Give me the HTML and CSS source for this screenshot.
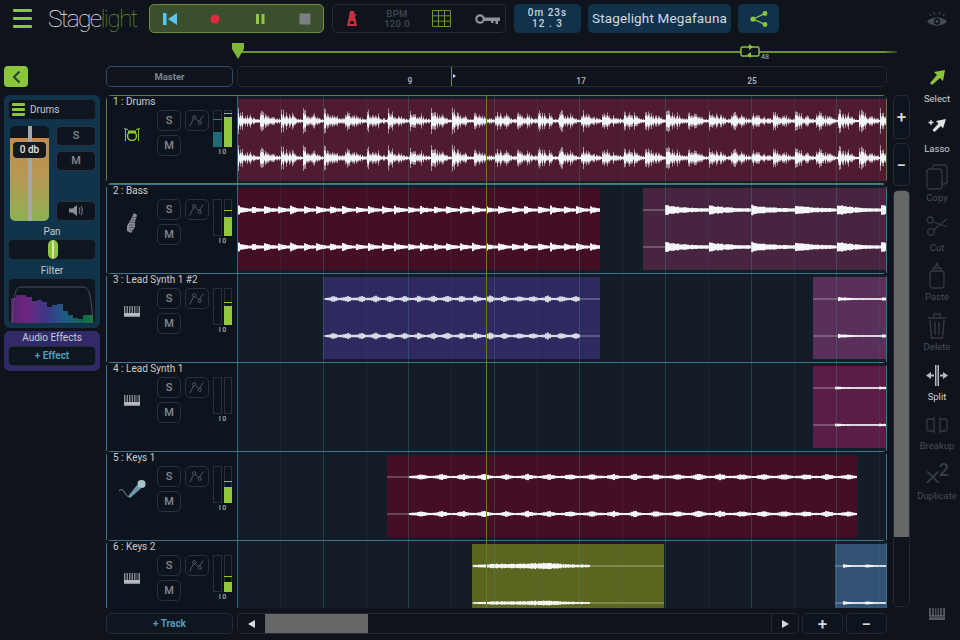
FILE: index.html
```html
<!DOCTYPE html>
<html lang="en">
<head>
<meta charset="utf-8">
<title>Stagelight</title>
<link rel="stylesheet" href="styles.css">
</head>
<body>
<svg class="defs" width="0" height="0" aria-hidden="true">
  <symbol id="i-auto" viewBox="0 0 24 21">
    <path d="M4 17 L9 7 L14 12 L19 5" fill="none" stroke="currentColor" stroke-width="1"/>
    <circle cx="9" cy="7" r="1.8" fill="#0e141d" stroke="currentColor"/>
    <circle cx="15" cy="13" r="1.8" fill="#0e141d" stroke="currentColor"/>
  </symbol>
  <symbol id="i-keys" viewBox="0 0 16 11">
    <path d="M0 0h16v11H0z" fill="#8d9399"/>
    <path d="M2 0v7M4.500 0v7M7 0v7M9.500 0v7M12 0v7M14 0v7" stroke="#0e141d" stroke-width="1.200"/>
    <path d="M0 8.500h16" stroke="#c4c8cc" stroke-width="2"/>
  </symbol>
</svg>
<div class="app">
  <header class="topbar">
    <div class="burger"><i></i><i></i><i></i></div>
    <div class="logo"><span class="logo-a">Stage</span><span class="logo-b">light</span></div>
    <div class="transport">
      <svg class="t-icon" viewBox="0 0 14 12"><rect width="3.500" height="12" fill="#5cc6ef"/><path d="M14 0v12L5 6z" fill="#5cc6ef"/></svg>
      <svg class="t-icon" viewBox="0 0 14 12"><circle cx="7" cy="6" r="4.500" fill="#de2a3f"/></svg>
      <svg class="t-icon" viewBox="0 0 14 12"><path d="M3 1h3v10H3zM8.500 1h3v10h-3z" fill="#93c83e"/></svg>
      <svg class="t-icon" viewBox="0 0 14 12"><rect x="1.500" y="0.500" width="11" height="11" fill="#7c7f84"/></svg>
    </div>
    <div class="tools-group">
      <svg class="metro" viewBox="0 0 10 16"><path d="M3 0h4l3 15H0z" fill="#c5303e"/><path d="M3.500 10h3l.6 3H2.900z" fill="#0e131c"/><path d="M5 9 9 3" stroke="#c5303e" stroke-width="1.300"/></svg>
      <div class="bpm"><span>BPM</span><span>120.0</span></div>
      <svg class="gridicon" viewBox="0 0 19 17"><path d="M.5.500h18v16H.5zM6.500.500v16M12.500.500v16M.5 5.800h18M.5 11.200h18" fill="none" stroke="#6d9430" stroke-width="1"/></svg>
      <svg class="key" viewBox="0 0 25 10"><circle cx="5" cy="5" r="3.700" fill="none" stroke="#8f9398" stroke-width="2.200"/><path d="M9 3.500h16V7h-2v3h-2.500V7h-2v2h-2.500V7H9z" fill="#8f9398"/></svg>
    </div>
    <div class="clock"><span>0m 23s</span><span>12 . 3</span></div>
    <div class="song">Stagelight Megafauna</div>
    <div class="share">
      <svg viewBox="0 0 18 16" width="18" height="16"><path d="M3 8 15 2.500M3 8l12 5.500" stroke="#8bc53a" stroke-width="1.300"/><circle cx="3" cy="8" r="2.600" fill="#8bc53a"/><circle cx="15" cy="2.500" r="2.400" fill="#8bc53a"/><circle cx="15" cy="13.500" r="2.400" fill="#8bc53a"/></svg>
    </div>
    <svg class="eye" viewBox="0 0 20 16"><path d="M0 10.500C4 5 16 5 20 10.500 16 16 4 16 0 10.500z" fill="#474d55"/><circle cx="10" cy="10.500" r="3.200" fill="#0e131c"/><circle cx="10" cy="10.500" r="1.500" fill="#474d55"/><path d="M4 5 2.500 2.500M7.500 3.800 7 1M12.500 3.800 13 1M16 5l1.500-2.500" stroke="#474d55"/></svg>
  </header>

  <div class="timeline">
    <div class="loopline">
      <svg class="loop-start" viewBox="0 0 12 16"><path d="M0 0h12v6l-6 10L0 6z" fill="#7fb636"/></svg>
      <svg class="loop-end" viewBox="0 0 20 14"><rect x="1" y="3" width="18" height="9" rx="1.500" fill="#0e131c" stroke="#8bc53a" stroke-width="1.400"/><path d="M9 0v6l4-3zM11 8v6l-4-3z" fill="#8bc53a"/></svg>
      <span class="loop-num">48</span>
    </div>
  </div>

  <div class="workspace">
    <aside class="leftcol">
      <div class="backbtn"><svg viewBox="0 0 9 14" width="9" height="14"><path d="M7.500 1.500 2 7l5.500 5.500" fill="none" stroke="#23412c" stroke-width="2"/></svg></div>
      <div class="inspector">
        <div class="insp-title">
          <div class="burger small"><i></i><i></i><i></i></div>
          <span>Drums</span>
        </div>
        <div class="insp-row">
          <div class="fader">
            <div class="fader-top"></div>
            <div class="fader-fill"></div>
            <div class="fader-bar"></div>
            <div class="fader-label">0 db</div>
          </div>
          <div class="insp-btns">
            <div class="btn">S</div>
            <div class="btn">M</div>
            <div class="btn push-down"><svg viewBox="0 0 14 11" width="14" height="11"><path d="M0 3.500h3.500L8 0v11L3.500 7.500H0z" fill="#8a8e94"/><path d="M10 2.500c1 2 1 4 0 6M12 1c1.800 3 1.800 6 0 9" fill="none" stroke="#6b7076" stroke-width="1.200"/></svg></div>
          </div>
        </div>
        <div class="insp-label">Pan</div>
        <div class="pan"><div class="pan-thumb"></div></div>
        <div class="insp-label">Filter</div>
        <div class="filter">
          <svg viewBox="1 -1 86 45" width="86" height="45">
            <defs>
              <linearGradient id="spec" x1="0" x2="1" y1="0" y2="0">
                <stop offset="0" stop-color="#55256a"/><stop offset=".18" stop-color="#6e2680"/><stop offset=".45" stop-color="#3a3a86"/><stop offset=".65" stop-color="#1f5a86"/><stop offset=".85" stop-color="#146258"/><stop offset="1" stop-color="#147a38"/>
              </linearGradient>
            </defs>
            <path d="M3 46 V18 H8 V15 H18 V17 H24 V21 H29 V20 H34 V22 H39 V27 H44 V25 H49 V24 H55 V31 H60 V35 H65 V38 H70 V39 H75 V35 H85 V46Z" fill="url(#spec)"/>
            <path d="M4 44C6 9 8 7 14 7H74C80 7 83 9 85 44" fill="none" stroke="#59606a" stroke-width=".8"/>
          </svg>
        </div>
      </div>
      <div class="effects">
        <div class="effects-title">Audio Effects</div>
        <div class="addbtn">+ Effect</div>
      </div>
    </aside>

    <main class="center">
      <div class="rulerrow">
        <div class="master">Master</div>
        <div class="ruler">
          <span class="bar-num bar-9">9</span>
          <span class="ruler-tick"></span>
          <span class="bar-num bar-17">17</span>
          <span class="bar-num bar-25">25</span>
        </div>
      </div>

      <div class="tracks">
        <section class="track selected">
          <div class="thead">
            <div class="tname">1 : Drums</div>
            <div class="tctrl">
              <div class="ticon">
                <svg viewBox="0 0 16 14" width="16" height="14"><circle cx="8" cy="9" r="4.500" fill="none" stroke="#8bc53a" stroke-width="1.500"/><path d="M4 3.500h8v3H4z" fill="#8bc53a"/><path d="M0 1.500 4 2.500M16 1.500 12 2.500M1.500 2v12M14.500 2v12" stroke="#8bc53a"/></svg>
              </div>
              <div class="sm"><div class="btn">S</div><div class="btn">M</div></div>
              <div class="btn auto"><svg width="24" height="21"><use href="#i-auto"/></svg></div>
              <div class="meters">
                <div class="meters-row">
                  <div class="meter"><div class="fill teal" style="height:42%"></div><div class="peak teal-peak" style="bottom:74%"></div></div>
                  <div class="meter"><div class="fill" style="height:86%"></div><div class="peak" style="bottom:92%"></div></div>
                </div>
                <div class="scale">I 0</div>
              </div>
            </div>
          </div>
          <div class="lane">
            <div class="clip c-drums" style="left:0;width:648px" data-kind="spike" data-from="0" data-to="648" data-amp="14" data-period="21.400" data-seed="7"></div>
          </div>
        </section>

        <section class="track">
          <div class="thead">
            <div class="tname">2 : Bass</div>
            <div class="tctrl">
              <div class="ticon">
                <svg viewBox="0 0 12 20" width="12" height="20"><path d="M8 0 11 2 9 9 9 14 5 20 1 18 1 13 4 8z" fill="#8a8f95"/><path d="M3 12h5M3 14.500h5M3 17h4M4 9.500h5M5 7h5M6 4.500h4" stroke="#3a3f46" stroke-width=".7"/></svg>
              </div>
              <div class="sm"><div class="btn">S</div><div class="btn">M</div></div>
              <div class="btn auto"><svg width="24" height="21"><use href="#i-auto"/></svg></div>
              <div class="meters">
                <div class="meters-row">
                  <div class="meter"></div>
                  <div class="meter"><div class="fill" style="height:54%"></div><div class="peak" style="bottom:70%"></div></div>
                </div>
                <div class="scale">I 0</div>
              </div>
            </div>
          </div>
          <div class="lane">
            <div class="clip c-wine" style="left:0;width:362px" data-kind="block" data-from="0" data-to="362" data-amp="4.500" data-period="13" data-seed="11"></div>
            <div class="clip c-plum" style="left:405px;width:243px" data-kind="block" data-from="22" data-to="243" data-amp="5.500" data-period="43" data-seed="13"></div>
          </div>
        </section>

        <section class="track">
          <div class="thead">
            <div class="tname">3 : Lead Synth 1 #2</div>
            <div class="tctrl">
              <div class="ticon"><svg width="16" height="11"><use href="#i-keys"/></svg></div>
              <div class="sm"><div class="btn">S</div><div class="btn">M</div></div>
              <div class="btn auto"><svg width="24" height="21"><use href="#i-auto"/></svg></div>
              <div class="meters">
                <div class="meters-row">
                  <div class="meter"></div>
                  <div class="meter"><div class="fill" style="height:56%"></div><div class="peak" style="bottom:62%"></div></div>
                </div>
                <div class="scale">I 0</div>
              </div>
            </div>
          </div>
          <div class="lane">
            <div class="clip c-indigo" style="left:85px;width:277px" data-kind="thin" data-from="2" data-to="257" data-amp="3.500" data-period="14.300" data-seed="17"></div>
            <div class="clip c-violet" style="left:575px;width:73px" data-kind="block" data-from="25" data-to="73" data-amp="2" data-period="43" data-seed="19"></div>
          </div>
        </section>

        <section class="track">
          <div class="thead">
            <div class="tname">4 : Lead Synth 1</div>
            <div class="tctrl">
              <div class="ticon"><svg width="16" height="11"><use href="#i-keys"/></svg></div>
              <div class="sm"><div class="btn">S</div><div class="btn">M</div></div>
              <div class="btn auto"><svg width="24" height="21"><use href="#i-auto"/></svg></div>
              <div class="meters">
                <div class="meters-row"><div class="meter"></div><div class="meter"></div></div>
                <div class="scale">I 0</div>
              </div>
            </div>
          </div>
          <div class="lane">
            <div class="clip c-magenta" style="left:575px;width:73px" data-kind="block" data-from="22" data-to="73" data-amp="1.500" data-period="43" data-seed="23"></div>
          </div>
        </section>

        <section class="track">
          <div class="thead">
            <div class="tname">5 : Keys 1</div>
            <div class="tctrl">
              <div class="ticon">
                <svg viewBox="0 0 27 19" width="27" height="19"><path d="M0 11C2 8 4 10 6 13S9 18 12 15L20 8l-.8-.8" fill="none" stroke="#6f97ab" stroke-width="1"/><path d="M9 16.500 18 5l4 3.500-11 9.500z" fill="#6f97ab"/><circle cx="22.500" cy="4" r="4" fill="#a9c3cf"/></svg>
              </div>
              <div class="sm"><div class="btn">S</div><div class="btn">M</div></div>
              <div class="btn auto"><svg width="24" height="21"><use href="#i-auto"/></svg></div>
              <div class="meters">
                <div class="meters-row">
                  <div class="meter"></div>
                  <div class="meter"><div class="fill" style="height:46%"></div><div class="peak" style="bottom:58%"></div></div>
                </div>
                <div class="scale">I 0</div>
              </div>
            </div>
          </div>
          <div class="lane">
            <div class="clip c-wine" style="left:149px;width:470px" data-kind="line" data-from="22" data-to="470" data-amp="3.200" data-period="21.400" data-seed="29"></div>
          </div>
        </section>

        <section class="track">
          <div class="thead">
            <div class="tname">6 : Keys 2</div>
            <div class="tctrl">
              <div class="ticon"><svg width="16" height="11"><use href="#i-keys"/></svg></div>
              <div class="sm"><div class="btn">S</div><div class="btn">M</div></div>
              <div class="btn auto"><svg width="24" height="21"><use href="#i-auto"/></svg></div>
              <div class="meters">
                <div class="meters-row">
                  <div class="meter"></div>
                  <div class="meter"><div class="fill" style="height:30%"></div><div class="peak" style="bottom:42%"></div></div>
                </div>
                <div class="scale">I 0</div>
              </div>
            </div>
          </div>
          <div class="lane">
            <div class="clip c-olive" style="left:234px;width:192px" data-kind="swell" data-from="1" data-to="118" data-amp="3.500" data-period="43" data-seed="31"></div>
            <div class="clip c-steel" style="left:597px;width:51px" data-kind="block" data-from="8" data-to="51" data-amp="1.800" data-period="21.400" data-seed="37"></div>
          </div>
        </section>
        <div class="playhead"></div>
      </div>

      <div class="bottombar">
        <div class="addbtn addtrack">+ Track</div>
        <div class="hscroll">
          <div class="hs-arrow"><svg viewBox="0 0 7 8" width="7" height="8"><path d="M7 0v8L0 4z" fill="#d8dadc"/></svg></div>
          <div class="hs-track"><div class="hs-thumb"></div></div>
          <div class="hs-arrow right"><svg viewBox="0 0 7 8" width="7" height="8"><path d="M0 0v8l7-4z" fill="#d8dadc"/></svg></div>
        </div>
        <div class="btn zoombtn">+</div>
        <div class="btn zoombtn">−</div>
      </div>
    </main>

    <div class="vzoom">
      <div class="btn vbtn vbtn-plus">+</div>
      <div class="btn vbtn">−</div>
      <div class="vscroll"><div class="vthumb"></div></div>
    </div>

    <nav class="toolcol">
      <div class="tool active">
        <div class="tool-ico"><svg viewBox="0 0 16 16" width="16" height="16"><path d="M16 0 5 2l3 3-7 8 2 2 8-7 3 3z" fill="#8bc53a"/></svg></div>
        <span>Select</span>
      </div>
      <div class="tool active">
        <div class="tool-ico"><svg viewBox="0 0 18 16" width="18" height="16"><path d="M18 0 8 2l2.500 2.500-6 6.500 2 2 6.500-6L15 9.500z" fill="#dfe3e6"/><path d="M3 1v5M.5 3.500h5" stroke="#dfe3e6" stroke-width="1.300"/></svg></div>
        <span>Lasso</span>
      </div>
      <div class="tool">
        <div class="tool-ico"><svg viewBox="0 0 22 26" width="22" height="26" fill="none" stroke="#343a42" stroke-width="1.300"><rect x="6" y="1" width="15" height="19" rx="3"/><rect x="1" y="5" width="15" height="20" rx="3" fill="#0e131c"/></svg></div>
        <span>Copy</span>
      </div>
      <div class="tool">
        <div class="tool-ico"><svg viewBox="0 0 22 20" width="22" height="20" fill="none" stroke="#343a42" stroke-width="1.300"><circle cx="4" cy="4" r="3"/><circle cx="5" cy="16" r="3.400"/><path d="M6.500 5.500 21 11M7.500 14 21 3"/></svg></div>
        <span>Cut</span>
      </div>
      <div class="tool">
        <div class="tool-ico"><svg viewBox="0 0 16 27" width="16" height="27" fill="none" stroke="#343a42" stroke-width="1.300"><rect x="1" y="9" width="14" height="17" rx="3"/><path d="M4 9V6h8v3M6 6l2-5 2 5" /></svg></div>
        <span>Paste</span>
      </div>
      <div class="tool">
        <div class="tool-ico"><svg viewBox="0 0 20 27" width="20" height="27" fill="none" stroke="#343a42" stroke-width="1.400"><path d="M1 6h18M7 5V2h6v3M3 8l1.500 18h11L17 8M8 10v13M12 10v13"/></svg></div>
        <span>Delete</span>
      </div>
      <div class="tool active">
        <div class="tool-ico"><svg viewBox="0 0 22 21" width="22" height="21"><path d="M9 0h1.500v21H9zM11.500 0H13v21h-1.500z" fill="#b7bbbf"/><path d="M0 10.500 5 7v2.500h3v2H5V14zM22 10.500 17 7v2.500h-3v2h3V14z" fill="#b7bbbf"/></svg></div>
        <span>Split</span>
      </div>
      <div class="tool">
        <div class="tool-ico"><svg viewBox="0 0 22 18" width="22" height="18" fill="none" stroke="#343a42" stroke-width="1.300"><path d="M8 3H3Q1 3 1 5v8q0 2 2 2h5M14 3h5q2 0 2 2v8q0 2-2 2h-5M8 1v16M14 1v16"/></svg></div>
        <span>Breakup</span>
      </div>
      <div class="tool">
        <div class="tool-ico"><span class="times">×<sup>2</sup></span></div>
        <span>Duplicate</span>
      </div>
      <svg class="pianokey" viewBox="0 0 16 12" width="16" height="12"><path d="M0 0h16v12H0z" fill="#565b62"/><path d="M2.500 0v7M5.500 0v7M8 0v7M10.500 0v7M13.500 0v7" stroke="#0e131c" stroke-width="1.300"/><path d="M0 9h16" stroke="#0e131c" stroke-width=".5"/></svg>
    </nav>
  </div>
</div>
<script src="waves.js"></script>
</body>
</html>
```

FILE: styles.css
```css
* { box-sizing: border-box; }
html, body { margin: 0; padding: 0; }
body {
  width: 960px;
  height: 640px;
  overflow: hidden;
  background: #0e131c;
  font-family: Roboto, "Liberation Sans", sans-serif;
  color: #c9cdd1;
}
.defs { position: absolute; }
.app { height: 640px; padding-top: 4px; display: flex; flex-direction: column; }

/* top bar */
.topbar { height: 29px; display: flex; align-items: stretch; padding-left: 13px; }
.burger { width: 19px; display: flex; flex-direction: column; justify-content: center; gap: 5px; }
.burger i { display: block; height: 3px; background: #8bc53a; border-radius: 1px; }
.burger.small { width: 13px; gap: 2.500px; }
.burger.small i { height: 2.500px; }
.logo { width: 101px; margin-left: 16px; font-size: 24.500px; font-weight: 100; letter-spacing: -1.700px; line-height: 29px; white-space: nowrap; }
.logo-a { color: #f0f2f4; }
.logo-b { color: #6d9430; }
.transport {
  width: 175px; display: flex; align-items: center; gap: 31px; padding-left: 13px;
  background: #3b4f2e; border: 1px solid #6d8f3a; border-radius: 5px;
}
.t-icon { width: 14px; height: 12px; flex: none; }
.tools-group {
  width: 174px; margin-left: 8px; position: relative; display: flex; align-items: center;
  border: 1px solid #262c36; border-radius: 5px; padding-left: 14px;
}
.metro { width: 10px; height: 16px; flex: none; }
.bpm { width: 44px; margin-left: 18px; display: flex; flex-direction: column; align-items: center; font-size: 9.500px; font-weight: 500; line-height: 10px; color: #41474f; letter-spacing: .3px; }
.gridicon { width: 19px; height: 17px; margin-left: 13px; flex: none; }
.key { width: 25px; height: 10px; margin-left: 24px; flex: none; }
.clock {
  width: 67px; margin-left: 8px; background: #10324a; border-radius: 5px;
  display: flex; flex-direction: column; align-items: center; justify-content: center;
  font-size: 10px; font-weight: 500; line-height: 10.500px; letter-spacing: 1px; color: #c9d6de;
}
.song {
  width: 143px; margin-left: 7px; background: #10324a; border-radius: 5px;
  font-size: 13.500px; line-height: 29px; text-align: center; color: #d3dae0; letter-spacing: .15px; white-space: nowrap;
}
.share { width: 41px; margin-left: 7px; background: #10324a; border-radius: 5px; display: flex; align-items: center; justify-content: center; }
.eye { width: 20px; height: 16px; margin: 7px 0 0 148px; flex: none; }

/* loop timeline */
.timeline { height: 16px; margin-top: 11px; padding-left: 237px; }
.loopline {
  position: relative; width: 660px; height: 2px; top: 7px;
  background: linear-gradient(90deg, #6d9430 0 98%, #2c3b24 100%);
}
.loop-start { position: absolute; left: -5px; top: -8px; width: 12px; height: 16px; }
.loop-end { position: absolute; left: 503px; top: -7px; width: 20px; height: 14px; }
.loop-num { position: absolute; left: 524px; top: 2px; font-size: 7px; font-weight: 500; color: #9aa0a6; }

/* workspace */
.workspace { flex: 1; margin-top: 6px; padding-left: 4px; display: flex; align-items: stretch; min-height: 0; }
.leftcol { width: 96px; flex: none; display: flex; flex-direction: column; }
.backbtn { width: 24px; height: 21px; background: #8bc53a; border-radius: 4px; display: flex; align-items: center; justify-content: center; }
.inspector { margin-top: 8px; height: 233px; background: #0f344c; border-radius: 6px; padding: 4px; display: flex; flex-direction: column; }
.insp-title { height: 21px; background: #0e1620; border: 1px solid #1e2c38; border-radius: 5px; display: flex; align-items: center; gap: 5px; padding-left: 3px; font-size: 10px; color: #c6cbcf; }
.insp-row { margin-top: 6px; height: 95px; display: flex; gap: 7px; padding-left: 2px; }
.fader { position: relative; width: 39px; height: 95px; background: #0e1620; border-radius: 5px; overflow: hidden; flex: none; }
.fader-top { height: 12px; }
.fader-fill { height: 83px; background: linear-gradient(180deg, #c58a4c 0%, #b59a55 50%, #8db052 100%); }
.fader-bar { position: absolute; left: 18px; top: 0; width: 4px; height: 95px; background: #a5a7a8; }
.fader-label { position: absolute; left: 3px; top: 16px; width: 33px; height: 16px; background: #14191f; border-radius: 4px; font-size: 10px; font-weight: 500; line-height: 16px; text-align: center; color: #e2e5e7; }
.insp-btns { width: 40px; display: flex; flex-direction: column; gap: 5px; }
.insp-btns .btn { height: 20px; }
.push-down { margin-top: 25px; }
.insp-label { margin-top: 5px; height: 12px; font-size: 10px; line-height: 12px; text-align: center; color: #c3c8cc; }
.pan { margin-top: 1px; height: 21px; background: #0e1620; border: 1px solid #1e2c38; border-radius: 5px; position: relative; }
.pan-thumb { position: absolute; left: 39px; top: 0; width: 10px; height: 19px; background: #8bc53a; border-radius: 5px; border-left: 4px solid #8bc53a; border-right: 4px solid #8bc53a; background-color: #d5e6b0; }
.filter { margin-top: 1px; height: 47px; background: #0e1620; border: 1px solid #1e2c38; border-radius: 5px; overflow: hidden; }
.filter svg { display: block; }
.effects { margin-top: 3px; height: 40px; background: #322a68; border-radius: 6px; padding: 0 4px; display: flex; flex-direction: column; }
.effects-title { height: 15px; font-size: 10px; line-height: 14px; text-align: center; color: #c6cadb; }
.addbtn { height: 20px; background: #0e1620; border: 1px solid #252b38; border-radius: 5px; font-size: 10px; font-weight: 700; line-height: 18px; text-align: center; color: #4f9dbd; }

/* generic button */
.btn { background: #0e141d; border: 1px solid #2a323e; border-radius: 5px; display: flex; align-items: center; justify-content: center; font-size: 11px; font-weight: 500; color: #85898f; }

/* center */
.center { width: 781px; flex: none; margin-left: 6px; display: flex; flex-direction: column; }
.rulerrow { height: 21px; display: flex; gap: 4px; }
.master { width: 127px; border: 1px solid #2a4f66; border-radius: 5px; font-size: 9.500px; font-weight: 700; line-height: 19px; text-align: center; color: #7f858b; }
.ruler { position: relative; width: 650px; border: 1px solid #232a34; border-radius: 5px; }
.bar-num { position: absolute; top: 9px; font-size: 8.500px; font-weight: 500; line-height: 11px; color: #b8bcc0; transform: translateX(-50%); }
.bar-9 { left: 172px; }
.bar-17 { left: 343px; }
.bar-25 { left: 514px; }
.ruler-tick { position: absolute; left: 213px; top: 0; width: 1px; height: 19px; background: #6d9430; }
.ruler-tick::after { content: ""; position: absolute; left: 2px; top: 7px; border-left: 3px solid #d8dadc; border-top: 2px solid transparent; border-bottom: 2px solid transparent; }

.tracks { position: relative; margin-top: 8px; height: 513px; overflow: hidden; }
.track { height: 89.100px; display: flex; border: 1px solid #3a7690; border-bottom: 0; border-radius: 5px 5px 0 0; }
.track.selected { border-color: #5b8040; border-bottom: 1px solid #5b8040; border-radius: 5px; }
.thead { width: 131px; flex: none; background: #0e141d; border-right: 1px solid #2f6a80; }
.tname { height: 12px; padding-left: 6px; margin-top: 0; font-size: 10px; line-height: 12px; color: #c9cdd1; white-space: nowrap; }
.tctrl { display: flex; margin-top: 2px; }
.ticon { width: 50px; height: 47px; display: flex; align-items: center; justify-content: center; flex: none; }
.ticon svg { display: block; }
.sm { width: 24px; display: flex; flex-direction: column; gap: 4px; flex: none; }
.sm .btn { height: 21px; }
.auto { width: 24px; height: 21px; margin-left: 4px; color: #565d65; flex: none; }
.meters { margin-left: 4px; width: 19px; flex: none; }
.meters-row { display: flex; gap: 2px; }
.meter { position: relative; width: 9px; height: 37px; border: 1px solid #2a3038; }
.fill { position: absolute; left: -1px; right: -1px; bottom: -1px; background: #93c83e; }
.fill.teal { background: #1f6b76; }
.peak { position: absolute; left: -1px; right: -1px; height: 1px; background: #93c83e; }
.peak.teal-peak { background: #2a7f8c; }
.scale { margin-top: 1px; font-size: 7px; font-weight: 500; line-height: 9px; text-align: center; color: #a8acb0; }

.lane { position: relative; flex: 1; min-width: 0; background: #141c28; overflow: hidden; }
.lane::after {
  content: ""; position: absolute; inset: 0; pointer-events: none;
  background-image: repeating-linear-gradient(90deg,
    transparent 0, transparent 42px,
    rgba(76,130,150,.13) 42px, rgba(76,130,150,.13) 43px,
    transparent 43px, transparent 84.600px,
    rgba(76,150,170,.28) 84.600px, rgba(76,150,170,.28) 85.600px);
}
.clip { position: absolute; top: 3px; height: 82px; }
.clip canvas { display: block; }
.c-drums { background: #4e1b31; }
.c-wine { background: #440f25; }
.c-plum { background: #47243f; }
.c-indigo { background: #2e2a60; }
.c-violet { background: #58305a; }
.c-magenta { background: #5a1d48; }
.c-olive { background: #5c651f; }
.c-steel { background: #315272; }
.playhead { position: absolute; left: 380px; top: 0; width: 1px; height: 513px; background: #5c8228; z-index: 3; }

.bottombar { margin-top: 5px; height: 21px; display: flex; }
.addtrack { width: 127px; height: 21px; line-height: 19px; }
.hscroll { width: 562px; margin-left: 4px; display: flex; border: 1px solid #232a34; border-radius: 5px; overflow: hidden; }
.hs-arrow { width: 27px; display: flex; align-items: center; justify-content: center; flex: none; }
.hs-arrow.right { border-left: 1px solid #232a34; }
.hs-track { flex: 1; }
.hs-thumb { width: 103px; height: 100%; background: #666768; }
.zoombtn { width: 41px; margin-left: 3px; font-size: 17px; font-weight: 500; color: #d8dadc; border-color: #232a34; }
.zoombtn:last-child { margin-left: 3px; }

/* vertical zoom */
.vzoom { width: 17px; flex: none; margin-left: 6px; padding-top: 29px; display: flex; flex-direction: column; gap: 4px; }
.vbtn { height: 43px; font-size: 17px; font-weight: 500; color: #d8dadc; border-color: #232a34; }
.vbtn-plus { height: 44px; }
.vscroll { height: 417px; border: 1px solid #232a34; border-radius: 5px; overflow: hidden; }
.vthumb { height: 347px; margin: -1px; background: #666768; border-radius: 5px 5px 3px 3px; }

/* tool column */
.toolcol { width: 46px; margin: -1px 0 0 4px; flex: none; display: flex; flex-direction: column; gap: 9.600px; padding-bottom: 20px; }
.tool { height: 40px; display: flex; flex-direction: column; align-items: center; font-size: 9.500px; line-height: 12px; color: #484d55; white-space: nowrap; }
.tool.active { color: #cfd3d6; }
.tool-ico { height: 25px; margin-bottom: 3px; display: flex; align-items: center; justify-content: center; }
.tool-ico svg { display: block; }
.times { font-size: 30px; line-height: 25px; font-weight: 300; color: #383d45; }
.times sup { font-size: 18px; line-height: 0; font-weight: 500; vertical-align: 9px; margin-left: -2px; }
.pianokey { margin: auto auto 0; }
```

FILE: waves.js
```js
(function () {
  var CENTERS = [22, 59];

  function rng(seed) {
    var s = seed * 2654435761 % 4294967296;
    return function () {
      s = (s + 0x6d2b79f5) % 4294967296;
      var t = Math.imul(s ^ (s >>> 15), 1 | s);
      t = (t + Math.imul(t ^ (t >>> 7), 61 | t)) ^ t;
      return ((t ^ (t >>> 14)) >>> 0) / 4294967296;
    };
  }

  // One array of half-heights per clip: both stereo channels share it.
  function envelope(kind, len, amp, period, rand) {
    var out = [], hold = 0;
    for (var x = 0; x < len; x++) {
      var phase = (x % period) / period, v;
      if (kind === 'spike') {
        var sub = ((x * 2) % period) / period;
        v = (Math.max(Math.pow(1 - phase, 2), 0.6 * Math.pow(1 - sub, 3)) * 0.8 + 0.2) * (0.35 + rand() * 0.65);
      } else if (kind === 'swell') {
        var p = x / len;
        v = (0.35 + 0.65 * Math.sin(p * Math.PI) * (0.8 + 0.2 * Math.sin(x / 9))) * (0.65 + rand() * 0.35);
      } else if (kind === 'thin' || kind === 'line') {
        var d = (phase - 0.5) / 0.22;
        if (x % 2 === 0) hold = (0.38 + 0.62 * Math.exp(-d * d)) * (0.7 + rand() * 0.3);
        v = hold;
      } else {
        if (x % 2 === 0) hold = (0.28 + 0.72 * Math.exp(-phase * 2.6)) * (0.75 + rand() * 0.25);
        v = hold;
      }
      out.push(v * amp);
    }
    return out;
  }

  document.querySelectorAll('.clip').forEach(function (clip) {
    var box = clip.getBoundingClientRect();
    var cv = document.createElement('canvas');
    cv.width = Math.round(box.width);
    cv.height = Math.round(box.height);
    clip.appendChild(cv);
    var ctx = cv.getContext('2d');
    var from = +clip.dataset.from, to = +clip.dataset.to, amp = +clip.dataset.amp;
    var kind = clip.dataset.kind;
    var env = envelope(kind, to - from, amp, +clip.dataset.period, rng(+clip.dataset.seed));

    CENTERS.forEach(function (cy, channel) {
      var scale = channel && kind === 'swell' ? 0.75 : 1;
      ctx.fillStyle = 'rgba(255,255,255,.45)';
      ctx.fillRect(0, cy - 0.5, cv.width, 1);
      for (var i = 0; i < env.length; i++) {
        var x = from + i, h = env[i] * scale;
        if (kind === 'spike') {
          ctx.fillStyle = 'rgba(235,238,242,.55)';
          ctx.fillRect(x, cy - h, 1, h * 2);
          ctx.fillStyle = '#f2f5f8';
          var core = Math.max(1, h * 0.6);
          ctx.fillRect(x, cy - core, 1, core * 2);
        } else {
          ctx.fillStyle = kind === 'thin' ? 'rgba(240,242,248,.85)' : '#f4f6f8';
          var half = Math.max(0.8, h);
          ctx.fillRect(x, cy - half, 1, half * 2);
        }
      }
    });
  });
})();
```
